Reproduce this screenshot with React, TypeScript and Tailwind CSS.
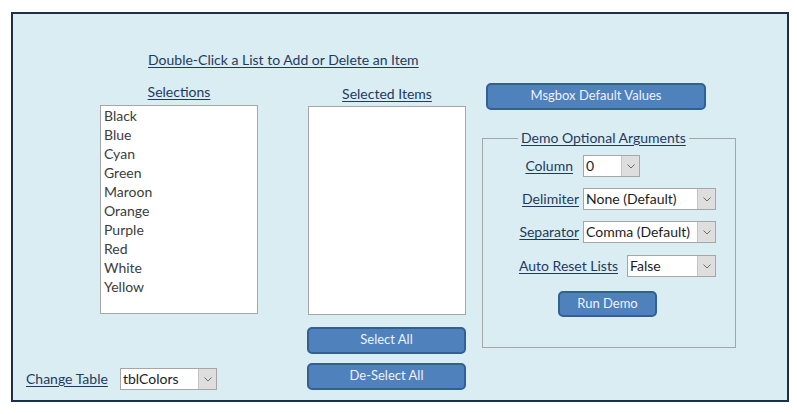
import React from "react";

const colors = ["Black", "Blue", "Cyan", "Green", "Maroon", "Orange", "Purple", "Red", "White", "Yellow"];

function Chevron() {
    return (
        <svg width="8" height="5" viewBox="0 0 8 5" fill="none">
            <polyline points="0.5,0.5 4,4 7.5,0.5" stroke="#6b6b6b" strokeWidth="1" />
        </svg>
    );
}

function Combo({ value, className }: { value: string; className: string }) {
    return (
        <div className={"flex h-[22px] border border-[#a6a6a6] bg-white " + className}>
            <span className="flex-1 pl-[2px] text-[14px] leading-[19px] text-[#1c1c1c] whitespace-nowrap overflow-hidden">
                {value}
            </span>
            <span className="flex w-[18px] items-center justify-center border-l border-[#c4c4c4] bg-[#dedede]">
                <Chevron />
            </span>
        </div>
    );
}

function Btn({ label, className }: { label: string; className: string }) {
    return (
        <button
            className={
                "flex items-center justify-center rounded-[5px] border-2 border-[#335f94] bg-[#4f81bd] pb-[1px] text-[13px] text-[#eef3fa] " +
                className
            }
        >
            {label}
        </button>
    );
}

export default function App() {
    return (
        <div className="h-[414px] w-[797px] bg-white pl-[11px] pt-[12px] font-['Lato','Open_Sans',sans-serif]">
            <div className="flex h-[390px] w-[778px] border-2 border-[#1e3048] bg-[#daedf3]">
                {/* lists side */}
                <div className="flex flex-col pt-[37px]">
                    <div className="ml-[135px] text-[14px] leading-[18px] text-[#1f3a5f] underline underline-offset-[2px]">
                        Double-Click a List to Add or Delete an Item
                    </div>
                    <div className="mt-[14px] flex">
                        <div className="flex w-[294px] flex-col">
                            <div className="ml-[87px] flex w-[158px] flex-col items-center">
                                <span className="text-[14px] leading-[18px] text-[#1f3a5f] underline underline-offset-[2px]">
                                    Selections
                                </span>
                                <div className="mt-[4px] h-[209px] w-full border border-[#a6a6a6] bg-white px-[3px]">
                                    {colors.map((c) => (
                                        <div key={c} className="text-[14px] leading-[19px] text-[#3c3c3c]">
                                            {c}
                                        </div>
                                    ))}
                                </div>
                            </div>
                            <div className="ml-[13px] mt-[54px] flex items-center">
                                <span className="w-[94px] text-[14px] leading-[18px] text-[#1f3a5f]">
                                    <span className="underline underline-offset-[2px]">Change Table</span>
                                </span>
                                <Combo value="tblColors" className="w-[97px]" />
                            </div>
                        </div>
                        <div className="flex w-[159px] flex-col pt-[2px]">
                            <div className="ml-[1px] flex w-[158px] flex-col items-center">
                                <span className="text-[14px] leading-[18px] text-[#1f3a5f] underline underline-offset-[2px]">
                                    Selected Items
                                </span>
                                <div className="mt-[3px] h-[209px] w-full border border-[#a6a6a6] bg-white" />
                            </div>
                            <Btn label="Select All" className="mt-[12px] h-[27px] w-[159px]" />
                            <Btn label="De-Select All" className="mt-[9px] h-[27px] w-[159px]" />
                        </div>
                    </div>
                </div>

                {/* options side */}
                <div className="ml-[16px] flex flex-col pt-[69px]">
                    <Btn label="Msgbox Default Values" className="ml-[4px] h-[27px] w-[220px]" />
                    <fieldset className="mt-[19px] w-[254px] border border-[#a6a6a6] pb-[30px]">
                        <legend className="ml-[35px] px-[3px] text-[14px] leading-[18px] text-[#1f3a5f]">
                            <span className="underline underline-offset-[2px]">Demo Optional Arguments</span>
                        </legend>
                        <div className="mt-[8px] flex items-center">
                            <span className="w-[100px] pr-[10px] text-right text-[14px] leading-[18px] text-[#1f3a5f] underline underline-offset-[2px]">
                                Column
                            </span>
                            <Combo value="0" className="w-[57px]" />
                        </div>
                        <div className="mt-[11px] flex items-center">
                            <span className="w-[100px] pr-[4px] text-right text-[14px] leading-[18px] text-[#1f3a5f] underline underline-offset-[2px]">
                                Delimiter
                            </span>
                            <Combo value="None (Default)" className="w-[133px]" />
                        </div>
                        <div className="mt-[11px] flex items-center">
                            <span className="w-[100px] pr-[4px] text-right text-[14px] leading-[18px] text-[#1f3a5f] underline underline-offset-[2px]">
                                Separator
                            </span>
                            <Combo value="Comma (Default)" className="w-[133px]" />
                        </div>
                        <div className="mt-[12px] flex items-center">
                            <span className="w-[144px] pr-[9px] text-right text-[14px] leading-[18px] text-[#1f3a5f] underline underline-offset-[2px]">
                                Auto Reset Lists
                            </span>
                            <Combo value="False" className="w-[89px]" />
                        </div>
                        <Btn label="Run Demo" className="ml-[75px] mt-[14px] h-[26px] w-[99px]" />
                    </fieldset>
                </div>
            </div>
        </div>
    );
}
